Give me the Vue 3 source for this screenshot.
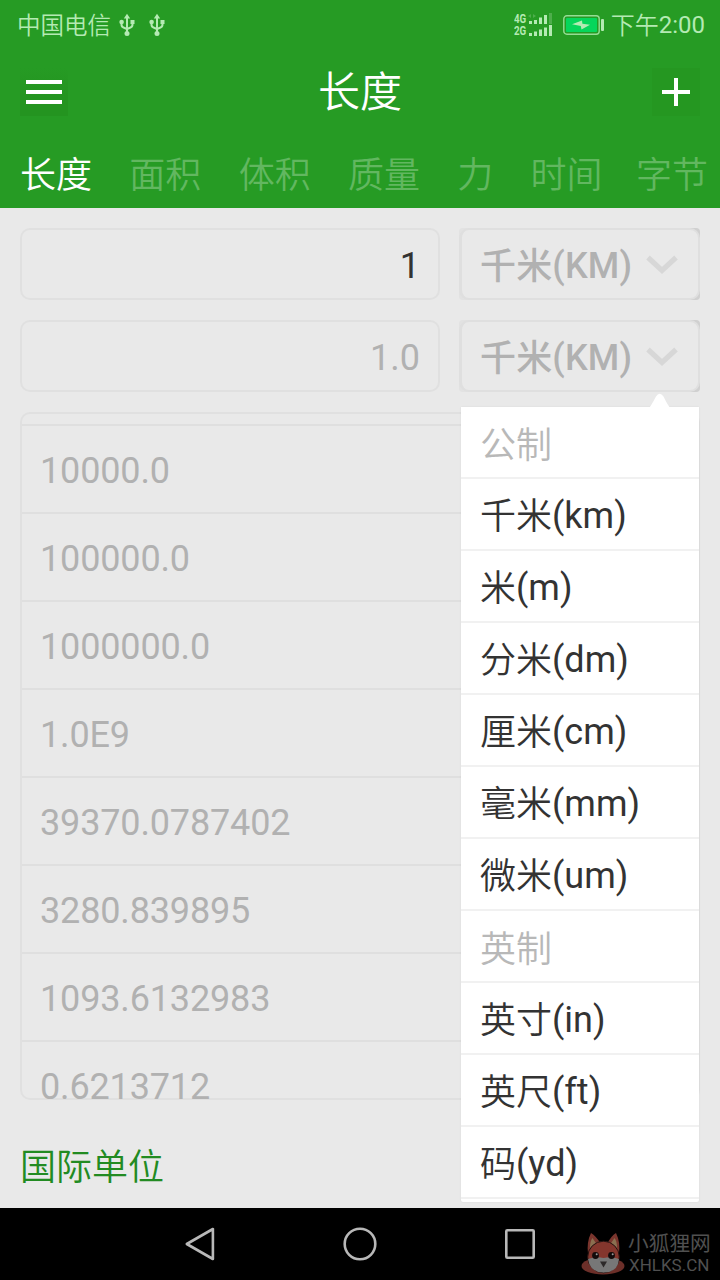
<script setup>
import { ref } from 'vue';

const tabs = ['长度', '面积', '体积', '质量', '力', '时间', '字节'];
const activeTab = ref('长度');

const inputValue = ref('1');
const outputValue = ref('1.0');
const selectedUnit = ref({ cn: '千米', en: '(KM)' });

const results = [
  '10000.0',
  '100000.0',
  '1000000.0',
  '1.0E9',
  '39370.0787402',
  '3280.839895',
  '1093.6132983',
  '0.6213712'
];

const menuOpen = ref(true);
const unitOptions = [
  { cn: '公制', group: true },
  { cn: '千米', en: '(km)' },
  { cn: '米', en: '(m)' },
  { cn: '分米', en: '(dm)' },
  { cn: '厘米', en: '(cm)' },
  { cn: '毫米', en: '(mm)' },
  { cn: '微米', en: '(um)' },
  { cn: '英制', group: true },
  { cn: '英寸', en: '(in)' },
  { cn: '英尺', en: '(ft)' },
  { cn: '码', en: '(yd)' }
];

function pickUnit(item) {
  if (item.group) return;
  selectedUnit.value = { cn: item.cn, en: item.en.toUpperCase() };
  menuOpen.value = false;
}
</script>

<template>
  <div class="screen">
    <header class="header">
      <div class="status-bar">
        <span class="carrier">中国电信</span>
        <svg v-for="n in 2" :key="n" class="usb" viewBox="0 0 16 24" width="16" height="24">
          <path d="M8 4V21M2.5 8.5V11.5Q2.5 14 5 14.8L8 16M13.5 8.5V11.5Q13.5 14 11 14.8L8 16" />
          <path class="solid" d="M8 .8L11.2 5.5H4.8ZM11.5 7H15.5V11H11.5Z" />
          <circle class="solid" cx="2.6" cy="9" r="2.3" />
          <circle class="solid" cx="8" cy="20.6" r="2.5" />
        </svg>
        <span class="spacer"></span>
        <div class="signal">
          <div class="network">
            <span>4G</span>
            <span>2G</span>
          </div>
          <svg viewBox="14 0 25 24" width="25" height="24">
            <path d="M15 8h3v3h-3zM20 7h3v4h-3zM25 4.5h3v6.5h-3zM30 2h3v9h-3z" />
            <path class="faint" d="M35 0h3v11h-3zM14 3l3-2v4zM22 3l-3-2v4z" />
            <path d="M15 20h3v3h-3zM20 18.5h3v4.5h-3zM25 16.5h3v6.5h-3zM30 14.5h3v8.5h-3zM35 12h3v11h-3z" />
          </svg>
        </div>
        <svg class="battery" viewBox="0 0 42 20" width="42" height="20">
          <rect class="battery-frame" x="0.8" y="0.8" width="35.4" height="18.4" rx="3" />
          <rect class="battery-fill" x="3" y="3" width="31" height="14" rx="1" />
          <path class="battery-light" d="M9 9.2L19 5.4L19.4 8.8L27 9.8L18.5 14.6L17.8 11Z" />
          <rect class="battery-light" x="38" y="4" width="3" height="12" rx="1" />
        </svg>
        <span class="clock">下午<span class="time">2:00</span></span>
      </div>

      <div class="title-bar">
        <button class="icon-btn menu-btn">
          <svg viewBox="0 0 48 48" width="48" height="48">
            <path d="M6 14H42M6 24H42M6 34H42" />
          </svg>
        </button>
        <h1 class="title">长度</h1>
        <button class="icon-btn">
          <svg viewBox="0 0 48 48" width="48" height="48">
            <path d="M10 24H38M24 10V38" />
          </svg>
        </button>
      </div>

      <nav class="tabs">
        <span
          v-for="tab in tabs"
          :key="tab"
          class="tab"
          :class="{ active: tab === activeTab }"
          @click="activeTab = tab"
        >{{ tab }}</span>
      </nav>
    </header>

    <main class="content">
      <div class="row">
        <div class="field entered">{{ inputValue }}</div>
        <div class="select">
          <div class="select-box">
            <span class="unit"><span class="cn">{{ selectedUnit.cn }}</span>{{ selectedUnit.en }}</span>
            <svg class="chevron" viewBox="0 0 34 22" width="34" height="22">
              <path d="M3 3.5L17 16.5L31 3.5" />
            </svg>
          </div>
        </div>
      </div>

      <div class="row">
        <div class="field">{{ outputValue }}</div>
        <div class="select">
          <div class="select-box" @click="menuOpen = !menuOpen">
            <span class="unit"><span class="cn">{{ selectedUnit.cn }}</span>{{ selectedUnit.en }}</span>
            <svg class="chevron" viewBox="0 0 34 22" width="34" height="22">
              <path d="M3 3.5L17 16.5L31 3.5" />
            </svg>
          </div>
          <div v-if="menuOpen" class="popup">
            <svg class="popup-arrow" viewBox="0 0 22 15" width="22" height="15">
              <path d="M0 15Q2 13 7 3.5Q10.5 -2 14.5 3.5Q19 13 21.5 15Z" />
            </svg>
            <div
              v-for="item in unitOptions"
              :key="item.cn"
              class="option"
              :class="{ group: item.group }"
              @click="pickUnit(item)"
            ><span class="cn">{{ item.cn }}</span>{{ item.en }}</div>
          </div>
        </div>
      </div>

      <div class="results">
        <div v-for="value in results" :key="value" class="result">{{ value }}</div>
      </div>

      <div class="standard">国际单位</div>
    </main>

    <footer class="nav-bar">
      <svg class="nav-icon" viewBox="0 0 40 40" width="40" height="40">
        <path d="M6.8 20L32.9 5V35Z" />
      </svg>
      <svg class="nav-icon" viewBox="0 0 40 40" width="40" height="40">
        <circle cx="20" cy="20" r="15.3" />
      </svg>
      <svg class="nav-icon" viewBox="0 0 40 40" width="40" height="40">
        <rect x="6.3" y="6.3" width="27.4" height="27.4" rx="1" />
      </svg>

      <div class="watermark">
        <svg viewBox="0 0 44 44" width="44" height="44">
          <ellipse cx="22" cy="34" rx="21.5" ry="8.5" fill="#6c2f29" />
          <path d="M7 22Q5.5 10 10 1Q15 4 20 12ZM38 22Q39.5 10 35 1Q30 4 26 12Z" fill="#7a352d" />
          <path d="M9 16Q9 9 11.5 6L15.5 12ZM36 16Q36 9 33.5 6L29.5 12Z" fill="#8a6f50" />
          <circle cx="22.5" cy="25" r="15.8" fill="#84362d" stroke="#241311" />
          <path d="M7 27Q15 24 22.5 26Q31 24 38 27Q37 40.5 22.5 40.5Q9 40.5 7 27Z" fill="#777" />
          <circle cx="14.5" cy="23.5" r="3.4" fill="#120b0b" />
          <circle cx="30.5" cy="23.5" r="3.4" fill="#120b0b" />
          <circle cx="15.7" cy="22.3" r="1" fill="#999" />
          <circle cx="31.7" cy="22.3" r="1" fill="#999" />
          <path d="M19 29.5H26L22.5 35.5Z" fill="#2d2929" />
        </svg>
        <div class="watermark-text">
          <span class="site-name">小狐狸网</span>
          <span class="site-url">XHLKS.CN</span>
        </div>
      </div>
    </footer>
  </div>
</template>

<style>
body {
  margin: 0;
  background-color: #000;
}
</style>

<style scoped>
.screen {
  display: flex;
  flex-direction: column;
  width: 720px;
  height: 1280px;
  overflow: hidden;
  box-sizing: border-box;
  font-family: Roboto, "Noto Sans CJK SC", sans-serif;
  font-size: 36px;
  background-color: #e9e9e9;
}

.screen * {
  box-sizing: border-box;
}

.header {
  height: 208px;
  background-color: #269b24;
  color: #fff;
}

.status-bar {
  display: flex;
  align-items: center;
  height: 50px;
  padding: 0 15px 0 17px;
  color: #b4eab3;
}

.carrier {
  padding-top: 2px;
  margin-right: 8px;
  font-size: 23.5px;
  font-weight: 350;
  line-height: 46px;
}

.usb {
  margin-right: 14px;
  fill: none;
  stroke: #b4eab3;
  stroke-width: 2;
}

.usb .solid {
  fill: #b4eab3;
  stroke: none;
}

.spacer {
  flex: 1;
}

.signal {
  display: flex;
  margin-right: 10px;
  fill: #b4eab3;
}

.network {
  display: flex;
  flex-direction: column;
  width: 14px;
  font-size: 12.5px;
  font-weight: 700;
  line-height: 12px;
  transform: scaleX(0.78);
  transform-origin: left;
}

.signal .faint {
  fill: #4eae4c;
}

.battery {
  margin-right: 6px;
}

.battery-frame {
  fill: none;
  stroke: #96dc94;
  stroke-width: 1.4;
}

.battery-fill {
  fill: #06d65b;
}

.battery-light {
  fill: #b4eab3;
}

.clock {
  font-size: 24px;
  font-weight: 350;
  line-height: 48px;
}

.clock .time {
  font-weight: 400;
  vertical-align: 1px;
}

.title-bar {
  display: flex;
  align-items: center;
  justify-content: space-between;
  height: 84px;
  padding: 0 20px;
}

.icon-btn {
  width: 48px;
  height: 48px;
  padding: 0;
  border: none;
  background-color: #259721;
}

.icon-btn.menu-btn {
  background: linear-gradient(#269b24, #249420 60%);
}

.icon-btn svg {
  display: block;
  fill: none;
  stroke: #fff;
  stroke-width: 4;
}

.title {
  margin: 0;
  padding-top: 2px;
  font-size: 42px;
  font-weight: 350;
  line-height: 82px;
}

.tabs {
  display: flex;
  align-items: center;
  gap: 37.3px;
  height: 74px;
  padding: 10px 0 0 20px;
  white-space: nowrap;
}

.tab {
  font-weight: 350;
  line-height: 64px;
  color: #62b760;
}

.tab:last-child {
  margin-left: -4px;
}

.tab.active {
  color: #fff;
}

.content {
  display: flex;
  flex-direction: column;
  gap: 20px;
  height: 1000px;
  padding: 20px;
  color: #b1b1b1;
}

.row {
  display: flex;
  gap: 19px;
  height: 72px;
  flex-shrink: 0;
}

.field {
  width: 420px;
  padding: 1px 18px 0 0;
  border: 2px solid #e0e0e0;
  border-radius: 10px;
  line-height: 70px;
  text-align: right;
}

.field.entered {
  color: #333;
}

.select {
  position: relative;
  width: 241px;
  border-radius: 4px;
  background: linear-gradient(#e2e2e2, #e2e2e2) left / 50% 100% no-repeat #d0d0d0;
}

.select-box {
  display: flex;
  align-items: center;
  height: 72px;
  padding: 2px 0 0 18px;
  border: 2px solid #dfdfdf;
  border-left-width: 3px;
  border-radius: 10px;
  background-color: #e9e9e9;
}

.unit {
  width: 165px;
  padding-top: 2px;
  line-height: 68px;
  font-weight: 500;
  letter-spacing: 0.15px;
}

.unit .cn {
  line-height: 1;
  vertical-align: -1px;
}

.chevron {
  fill: none;
  stroke: #d7d7d7;
  stroke-width: 5.2;
}

.popup {
  position: absolute;
  top: 87px;
  left: 2px;
  z-index: 10;
  width: 238px;
  height: 795px;
  border-radius: 0 0 2px 2px;
  background-color: #fff;
  box-shadow: 0 0 2px rgba(0, 0, 0, 0.08);
}

.popup-arrow {
  position: absolute;
  top: -14px;
  left: 188px;
  fill: #fff;
}

.option {
  height: 72px;
  padding: 2px 0 0 19px;
  border-bottom: 2px solid #f1f1f1;
  line-height: 70px;
  color: #333;
}

.option .cn {
  font-weight: 350;
  line-height: 1;
  vertical-align: -1px;
}

.option.group {
  padding-top: 3px;
  color: #b8b8b8;
}

.results {
  height: 688px;
  flex-shrink: 0;
  padding-top: 10px;
  border: 2px solid #e0e0e0;
  border-radius: 10px;
}

.result {
  height: 88px;
  padding: 2px 0 0 18px;
  border-top: 2px solid #dfdfdf;
  line-height: 86px;
  letter-spacing: -0.15px;
}

.standard {
  padding-top: 21px;
  line-height: 54px;
  font-weight: 350;
  color: #228b22;
}

.nav-bar {
  position: relative;
  display: flex;
  align-items: center;
  justify-content: center;
  gap: 120px;
  height: 72px;
  background-color: #000;
}

.nav-icon {
  fill: none;
  stroke: #b8b8b8;
  stroke-width: 2.6;
  stroke-linejoin: round;
}

.watermark {
  position: absolute;
  right: 9px;
  top: 24px;
  display: flex;
  gap: 3px;
  color: #505050;
}

.watermark-text {
  display: flex;
  flex-direction: column;
  width: 83px;
  white-space: nowrap;
}

.site-name {
  font-size: 20.7px;
  line-height: 25px;
}

.site-url {
  padding-left: 1px;
  font-size: 17px;
  line-height: 16px;
}
</style>
